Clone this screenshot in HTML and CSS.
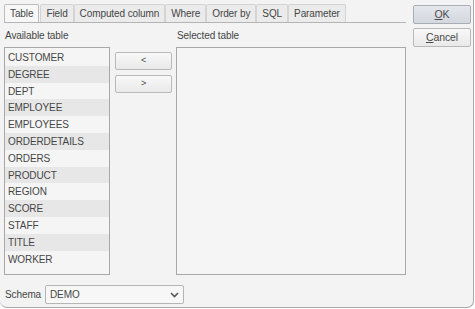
FILE: index.html
```html
<!DOCTYPE html>
<html>
<head>
<meta charset="utf-8">
<link rel="stylesheet" href="styles.css">
</head>
<body>
<div class="dialog">
  <div class="main">
    <div class="tabs">
      <div class="tab active">Table</div>
      <div class="tab">Field</div>
      <div class="tab">Computed column</div>
      <div class="tab">Where</div>
      <div class="tab">Order by</div>
      <div class="tab">SQL</div>
      <div class="tab">Parameter</div>
    </div>
    <div class="panel">
      <div class="col avail">
        <div class="label">Available table</div>
        <div class="list">
          <div class="row">CUSTOMER</div>
          <div class="row alt">DEGREE</div>
          <div class="row">DEPT</div>
          <div class="row alt">EMPLOYEE</div>
          <div class="row">EMPLOYEES</div>
          <div class="row alt">ORDERDETAILS</div>
          <div class="row">ORDERS</div>
          <div class="row alt">PRODUCT</div>
          <div class="row">REGION</div>
          <div class="row alt">SCORE</div>
          <div class="row">STAFF</div>
          <div class="row alt">TITLE</div>
          <div class="row">WORKER</div>
        </div>
      </div>
      <div class="movers">
        <div class="btn mover">&lt;</div>
        <div class="btn mover">&gt;</div>
      </div>
      <div class="col selected">
        <div class="label">Selected table</div>
        <div class="list"></div>
      </div>
    </div>
    <div class="schema">
      <span class="slabel">Schema</span>
      <div class="combo">
        <span>DEMO</span>
        <svg class="arrow" width="9" height="6" viewBox="0 0 9 6"><path d="M1 1 L4.5 4.5 L8 1" fill="none" stroke="#555" stroke-width="1.6"/></svg>
      </div>
    </div>
  </div>
  <div class="side">
    <div class="btn big ok"><u>O</u>K</div>
    <div class="btn big"><u>C</u>ancel</div>
  </div>
</div>
</body>
</html>
```
FILE: styles.css
```css
html, body {
  margin: 0;
  padding: 0;
  background: #ffffff;
}
body {
  font-family: "Liberation Sans", Arial, sans-serif;
  font-size: 10px;
  letter-spacing: -0.1px;
  color: #464646;
}
.dialog {
  width: 474px;
  height: 308px;
  box-sizing: border-box;
  background: #f2f3f2;
  border-right: 1px solid #a9a9a9;
  border-bottom: 1px solid #a9a9a9;
  border-radius: 0 0 7px 7px;
  display: flex;
}
.main {
  width: 406px;
  display: flex;
  flex-direction: column;
}
.tabs {
  display: flex;
  padding: 4px 0 0 4px;
  height: 18px;
}
.tab {
  box-sizing: border-box;
  height: 18px;
  padding: 0 5px;
  line-height: 17px;
  border: 1px solid #d4d4d4;
  border-bottom: none;
  background: #ebebeb;
  border-radius: 2px 2px 0 0;
}
.tab.active {
  background: #f7f7f7;
  border-color: #bdbdbd;
  height: 19px;
  margin-right: 1px;
}
.panel {
  margin-left: 4px;
  border-top: 1px solid #b4b4b4;
  display: flex;
  height: 253px;
  box-sizing: border-box;
}
.col {
  display: flex;
  flex-direction: column;
}
.label {
  height: 24px;
  line-height: 26px;
  padding-left: 1px;
}
.list {
  box-sizing: border-box;
  height: 229px;
  border: 1px solid #a8a8a8;
  background: #f5f5f5;
  padding-top: 1px;
}
.avail .list {
  width: 106px;
}
.row {
  height: 16.8px;
  line-height: 17px;
  padding-left: 3px;
}
.row.alt {
  background: #e7e7e7;
}
.movers {
  display: flex;
  flex-direction: column;
  gap: 5px;
  padding: 29px 4px 0 5px;
}
.btn {
  box-sizing: border-box;
  border: 1px solid #b9b9b9;
  border-radius: 2px;
  background: linear-gradient(#f8f8f8, #e9e9e9);
  text-align: center;
  color: #4a4a4a;
}
.mover {
  width: 57px;
  height: 18px;
  line-height: 15px;
  font-size: 9px;
}
.selected .list {
  width: 230px;
}
.schema {
  display: flex;
  align-items: center;
  padding: 10px 0 0 5px;
}
.slabel {
  width: 40px;
}
.combo {
  box-sizing: border-box;
  width: 139px;
  height: 19px;
  border: 1px solid #b5b5b5;
  border-radius: 2px;
  background: #f7f7f7;
  display: flex;
  align-items: center;
  justify-content: space-between;
  padding: 0 4px 0 4px;
}
.side {
  display: flex;
  flex-direction: column;
  gap: 4px;
  padding: 5px 0 0 7px;
}
.big {
  width: 58px;
  height: 19px;
  line-height: 17px;
  font-size: 10.5px;
}
.ok {
  background: linear-gradient(#e4e7ec, #d3d7de);
  border-color: #a9adb5;
}
u {
  text-decoration: underline;
}
```
